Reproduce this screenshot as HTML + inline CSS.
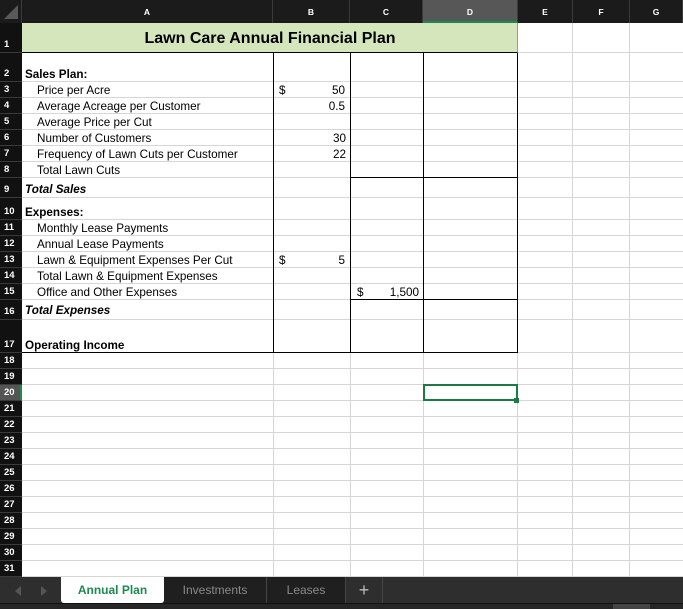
<!DOCTYPE html>
<html><head><meta charset="utf-8"><style>
*{margin:0;padding:0;box-sizing:border-box}
body{width:683px;height:609px;overflow:hidden;background:#fff;position:relative;font-family:"Liberation Sans",Arial,sans-serif;}
.a{position:absolute}
.h{position:absolute;height:1px;background:#d6d6d6}
.v{position:absolute;width:1px;background:#d6d6d6}
.bh{position:absolute;height:1px;background:#000}
.bv{position:absolute;width:1px;background:#000}
.ch{position:absolute;top:0;height:23px;color:#fff;font-size:8.5px;font-weight:bold;text-align:center;line-height:24px;border-right:1px solid #3a3a3a}
.rn{position:absolute;left:0;width:22px;color:#fff;font-size:9.5px;font-weight:bold;padding-left:4px;background:#111;border-bottom:1px solid #3a3a3a;display:flex;align-items:flex-end;padding-bottom:2px}
.t{position:absolute;font-size:11.7px;color:#000;white-space:nowrap;line-height:14px}
.tab{position:absolute;top:577px;height:26px;font-size:12px;line-height:27px;text-align:center;color:#8a8a8a}
</style></head><body>
<div class="a" style="left:0;top:0;width:683px;height:23px;background:#1b1b1b"></div>
<div class="a" style="left:0;top:0;width:22px;height:23px;background:#1b1b1b;border-right:1px solid #3a3a3a"></div>
<svg class="a" style="left:3px;top:4px" width="16" height="16"><polygon points="15,1 15,15 1,15" fill="#5a5a5a"/></svg>
<div class="ch" style="left:22px;width:251px">A</div>
<div class="ch" style="left:273px;width:77px">B</div>
<div class="ch" style="left:350px;width:73px">C</div>
<div class="ch" style="left:423px;width:95px;background:#575757;border-bottom:2px solid #1d8a4e">D</div>
<div class="ch" style="left:518px;width:55px">E</div>
<div class="ch" style="left:573px;width:57px">F</div>
<div class="ch" style="left:630px;width:53px">G</div>
<div class="a" style="left:0;top:23px;width:22px;height:554px;background:#111"></div>
<div class="rn" style="top:23px;height:30px">1</div>
<div class="rn" style="top:53px;height:29px">2</div>
<div class="rn" style="top:82px;height:16px">3</div>
<div class="rn" style="top:98px;height:16px">4</div>
<div class="rn" style="top:114px;height:16px">5</div>
<div class="rn" style="top:130px;height:16px">6</div>
<div class="rn" style="top:146px;height:16px">7</div>
<div class="rn" style="top:162px;height:16px">8</div>
<div class="rn" style="top:178px;height:20px">9</div>
<div class="rn" style="top:198px;height:22px">10</div>
<div class="rn" style="top:220px;height:16px">11</div>
<div class="rn" style="top:236px;height:16px">12</div>
<div class="rn" style="top:252px;height:16px">13</div>
<div class="rn" style="top:268px;height:16px">14</div>
<div class="rn" style="top:284px;height:16px">15</div>
<div class="rn" style="top:300px;height:20px">16</div>
<div class="rn" style="top:320px;height:33px">17</div>
<div class="rn" style="top:353px;height:16px">18</div>
<div class="rn" style="top:369px;height:16px">19</div>
<div class="rn" style="top:385px;height:16px;background:#555;border-right:2px solid #1d8a4e">20</div>
<div class="rn" style="top:401px;height:16px">21</div>
<div class="rn" style="top:417px;height:16px">22</div>
<div class="rn" style="top:433px;height:16px">23</div>
<div class="rn" style="top:449px;height:16px">24</div>
<div class="rn" style="top:465px;height:16px">25</div>
<div class="rn" style="top:481px;height:16px">26</div>
<div class="rn" style="top:497px;height:16px">27</div>
<div class="rn" style="top:513px;height:16px">28</div>
<div class="rn" style="top:529px;height:16px">29</div>
<div class="rn" style="top:545px;height:16px">30</div>
<div class="rn" style="top:561px;height:16px">31</div>
<div class="h" style="left:22px;width:661px;top:52px"></div>
<div class="h" style="left:22px;width:661px;top:81px"></div>
<div class="h" style="left:22px;width:661px;top:97px"></div>
<div class="h" style="left:22px;width:661px;top:113px"></div>
<div class="h" style="left:22px;width:661px;top:129px"></div>
<div class="h" style="left:22px;width:661px;top:145px"></div>
<div class="h" style="left:22px;width:661px;top:161px"></div>
<div class="h" style="left:22px;width:661px;top:177px"></div>
<div class="h" style="left:22px;width:661px;top:197px"></div>
<div class="h" style="left:22px;width:661px;top:219px"></div>
<div class="h" style="left:22px;width:661px;top:235px"></div>
<div class="h" style="left:22px;width:661px;top:251px"></div>
<div class="h" style="left:22px;width:661px;top:267px"></div>
<div class="h" style="left:22px;width:661px;top:283px"></div>
<div class="h" style="left:22px;width:661px;top:299px"></div>
<div class="h" style="left:22px;width:661px;top:319px"></div>
<div class="h" style="left:22px;width:661px;top:352px"></div>
<div class="h" style="left:22px;width:661px;top:368px"></div>
<div class="h" style="left:22px;width:661px;top:384px"></div>
<div class="h" style="left:22px;width:661px;top:400px"></div>
<div class="h" style="left:22px;width:661px;top:416px"></div>
<div class="h" style="left:22px;width:661px;top:432px"></div>
<div class="h" style="left:22px;width:661px;top:448px"></div>
<div class="h" style="left:22px;width:661px;top:464px"></div>
<div class="h" style="left:22px;width:661px;top:480px"></div>
<div class="h" style="left:22px;width:661px;top:496px"></div>
<div class="h" style="left:22px;width:661px;top:512px"></div>
<div class="h" style="left:22px;width:661px;top:528px"></div>
<div class="h" style="left:22px;width:661px;top:544px"></div>
<div class="h" style="left:22px;width:661px;top:560px"></div>
<div class="h" style="left:22px;width:661px;top:576px"></div>
<div class="v" style="left:273px;top:23px;height:554px"></div>
<div class="v" style="left:350px;top:23px;height:554px"></div>
<div class="v" style="left:423px;top:23px;height:554px"></div>
<div class="v" style="left:517px;top:23px;height:554px"></div>
<div class="v" style="left:572px;top:23px;height:554px"></div>
<div class="v" style="left:629px;top:23px;height:554px"></div>
<div class="a" style="left:22px;top:23px;width:496px;height:30px;background:#d5e6bd;border-bottom:1px solid #000;border-right:1px solid #8fa870"></div>
<div class="a" style="left:22px;top:29px;width:496px;text-align:center;font-size:16px;font-weight:bold;line-height:20px">Lawn Care Annual Financial Plan</div>
<div class="bv" style="left:273px;top:53px;height:300px"></div>
<div class="bv" style="left:350px;top:53px;height:300px"></div>
<div class="bv" style="left:423px;top:53px;height:300px"></div>
<div class="bv" style="left:517px;top:53px;height:300px"></div>
<div class="bh" style="left:350px;width:168px;top:177px"></div>
<div class="bh" style="left:350px;width:168px;top:299px"></div>
<div class="bh" style="left:22px;width:496px;top:352px"></div>
<div class="t" style="left:25px;top:68px;font-weight:bold">Sales Plan:</div>
<div class="t" style="left:37px;top:84px">Price per Acre</div>
<div class="t" style="left:37px;top:100px">Average Acreage per Customer</div>
<div class="t" style="left:37px;top:116px">Average Price per Cut</div>
<div class="t" style="left:37px;top:132px">Number of Customers</div>
<div class="t" style="left:37px;top:148px">Frequency of Lawn Cuts per Customer</div>
<div class="t" style="left:37px;top:164px">Total Lawn Cuts</div>
<div class="t" style="left:25px;top:183px;font-weight:bold;font-style:italic">Total Sales</div>
<div class="t" style="left:25px;top:206px;font-weight:bold">Expenses:</div>
<div class="t" style="left:37px;top:222px">Monthly Lease Payments</div>
<div class="t" style="left:37px;top:238px">Annual Lease Payments</div>
<div class="t" style="left:37px;top:254px">Lawn &amp; Equipment Expenses Per Cut</div>
<div class="t" style="left:37px;top:270px">Total Lawn &amp; Equipment Expenses</div>
<div class="t" style="left:37px;top:286px">Office and Other Expenses</div>
<div class="t" style="left:25px;top:304px;font-weight:bold;font-style:italic">Total Expenses</div>
<div class="t" style="left:25px;top:339px;font-weight:bold">Operating Income</div>
<div class="t" style="left:279px;top:84px">$</div>
<div class="t" style="left:300px;top:84px;width:45px;text-align:right">50</div>
<div class="t" style="left:300px;top:100px;width:45px;text-align:right">0.5</div>
<div class="t" style="left:300px;top:132px;width:46px;text-align:right">30</div>
<div class="t" style="left:300px;top:148px;width:46px;text-align:right">22</div>
<div class="t" style="left:279px;top:254px">$</div>
<div class="t" style="left:300px;top:254px;width:45px;text-align:right">5</div>
<div class="t" style="left:357px;top:286px">$</div>
<div class="t" style="left:370px;top:286px;width:49px;text-align:right">1,500</div>
<div class="a" style="left:423px;top:384px;width:95px;height:17px;border:2px solid #1d7a45"></div>
<div class="a" style="left:514px;top:398px;width:5px;height:5px;background:#1d7a45"></div>
<div class="a" style="left:0;top:577px;width:683px;height:27px;background:#2e2e2e"></div>
<div class="a" style="left:0;top:603px;width:683px;height:6px;background:#262626;border-top:1px solid #111"></div>
<div class="a" style="left:613px;top:604px;width:37px;height:5px;background:#444"></div>
<svg class="a" style="left:12px;top:584px" width="40" height="14"><polygon points="9,2 3,7 9,12" fill="#555"/><polygon points="29,2 35,7 29,12" fill="#555"/></svg>
<div class="tab" style="left:61px;width:103px;background:#fff;color:#1d8a4e;font-weight:bold;border-radius:0 0 3px 3px">Annual Plan</div>
<div class="tab" style="left:164px;width:103px;background:#1f1f1f;border-right:1px solid #444">Investments</div>
<div class="tab" style="left:267px;width:79px;background:#1f1f1f;border-right:1px solid #444">Leases</div>
<div class="tab" style="left:346px;width:37px;color:#bbb;font-size:18px;border-right:1px solid #444">+</div>
</body></html>
